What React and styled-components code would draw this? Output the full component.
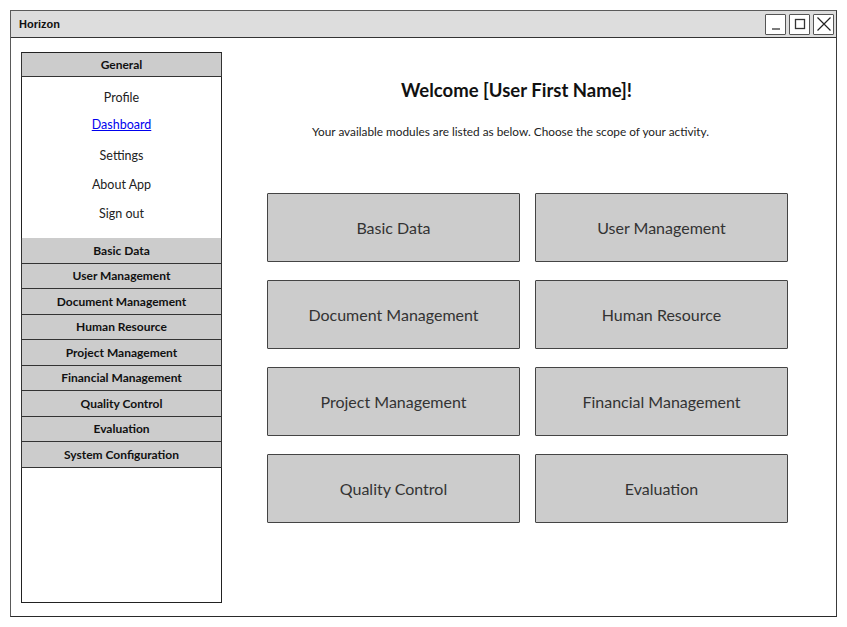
import React from "react";
import styled, { createGlobalStyle } from "styled-components";

const GlobalStyle = createGlobalStyle`
  body {
    margin: 0;
    background: #ffffff;
    font-family: Lato, "Open Sans", sans-serif;
  }
`;

const Page = styled.div`
  padding: 10px;
  width: 847px;
  height: 627px;
  box-sizing: border-box;
`;

const Window = styled.div`
  width: 827px;
  height: 607px;
  box-sizing: border-box;
  border: 1.5px solid #5a5a5a;
  border-right-color: #3a3a3a;
  border-bottom-color: #2a2a2a;
  display: flex;
  flex-direction: column;
`;

const TitleBar = styled.div`
  height: 26px;
  flex: none;
  background: #dddddd;
  border-bottom: 1.5px solid #333;
  display: flex;
  align-items: center;
  justify-content: space-between;
  padding: 0 2px 0 8px;
`;

const TitleText = styled.span`
  font-family: "Liberation Sans", Arial, sans-serif;
  font-weight: bold;
  font-size: 11px;
  color: #111;
`;

const Controls = styled.div`
  display: flex;
  gap: 3px;
`;

const ControlButton = styled.div`
  width: 21px;
  height: 21px;
  box-sizing: border-box;
  background: #ffffff;
  border: 1.5px solid #555;
  border-radius: 1px;
  display: flex;
  align-items: center;
  justify-content: center;
`;

const Body = styled.div`
  flex: 1;
  display: flex;
  padding: 14px 0 0 10px;
`;

const Sidebar = styled.div`
  width: 201px;
  height: 551px;
  box-sizing: border-box;
  border: 1px solid #222;
  border-top: none;
  display: flex;
  flex-direction: column;
`;

const SectionHeader = styled.div`
  height: ${(p) => (p.first ? "25px" : "25.5px")};
  box-sizing: border-box;
  margin: 0 -1px;
  background: #cccccc;
  border: 1px solid #333;
  border-top: ${(p) => (p.first ? "1.5px solid #222" : "none")};
  display: flex;
  align-items: center;
  justify-content: center;
  font-weight: bold;
  font-size: 12px;
  color: #111;
`;

const MenuList = styled.div`
  padding: 6px 0 10px;
  display: flex;
  flex-direction: column;
`;

const MenuItem = styled.div`
  height: 29px;
  display: flex;
  align-items: center;
  justify-content: center;
  font-size: 12.5px;
  color: #222;
`;

const MenuLink = styled.a`
  color: #0000ee;
  text-decoration: underline;
  font-size: 12.5px;
  margin-bottom: 4px;
`;

const Main = styled.div`
  display: flex;
  flex-direction: column;
  align-items: center;
  margin-left: 45px;
  width: 521px;
`;

const Heading = styled.h1`
  margin: 26px 22px 0 0;
  font-size: 18.5px;
  font-weight: bold;
  color: #111;
  line-height: 24px;
`;

const Subtitle = styled.p`
  margin: 22px 34px 0 0;
  font-size: 11.8px;
  color: #222;
  line-height: 15px;
  white-space: nowrap;
`;

const ModuleGrid = styled.div`
  margin-top: 54px;
  display: grid;
  grid-template-columns: 253px 253px;
  grid-auto-rows: 69px;
  column-gap: 15px;
  row-gap: 18px;
`;

const ModuleCard = styled.div`
  background: #cccccc;
  border: 1px solid #444;
  border-radius: 1px;
  display: flex;
  align-items: center;
  justify-content: center;
  font-size: 16px;
  color: #333;
  box-sizing: border-box;
`;

const menu = ["Profile", "Dashboard", "Settings", "About App", "Sign out"];

const sections = [
  "Basic Data",
  "User Management",
  "Document Management",
  "Human Resource",
  "Project Management",
  "Financial Management",
  "Quality Control",
  "Evaluation",
  "System Configuration",
];

const modules = [
  "Basic Data",
  "User Management",
  "Document Management",
  "Human Resource",
  "Project Management",
  "Financial Management",
  "Quality Control",
  "Evaluation",
];

export default function App() {
  return (
    <Page>
      <GlobalStyle />
      <Window>
        <TitleBar>
          <TitleText>Horizon</TitleText>
          <Controls>
            <ControlButton>
              <svg width="14" height="14" viewBox="0 0 14 14">
                <path d="M3 12 H11" stroke="#333" strokeWidth="1.3" />
              </svg>
            </ControlButton>
            <ControlButton>
              <svg width="14" height="14" viewBox="0 0 14 14">
                <rect x="2.5" y="2.5" width="9" height="9" fill="none" stroke="#333" strokeWidth="1.3" />
              </svg>
            </ControlButton>
            <ControlButton>
              <svg width="16" height="16" viewBox="0 0 16 16">
                <path d="M1.5 1.5 L14.5 14.5 M14.5 1.5 L1.5 14.5" stroke="#222" strokeWidth="1.2" />
              </svg>
            </ControlButton>
          </Controls>
        </TitleBar>
        <Body>
          <Sidebar>
            <SectionHeader first>General</SectionHeader>
            <MenuList>
              {menu.map((item) => (
                <MenuItem key={item}>
                  {item === "Dashboard" ? <MenuLink href="#">{item}</MenuLink> : item}
                </MenuItem>
              ))}
            </MenuList>
            {sections.map((s) => (
              <SectionHeader key={s}>{s}</SectionHeader>
            ))}
          </Sidebar>
          <Main>
            <Heading>Welcome [User First Name]!</Heading>
            <Subtitle>
              Your available modules are listed as below. Choose the scope of your activity.
            </Subtitle>
            <ModuleGrid>
              {modules.map((m) => (
                <ModuleCard key={m}>{m}</ModuleCard>
              ))}
            </ModuleGrid>
          </Main>
        </Body>
      </Window>
    </Page>
  );
}
